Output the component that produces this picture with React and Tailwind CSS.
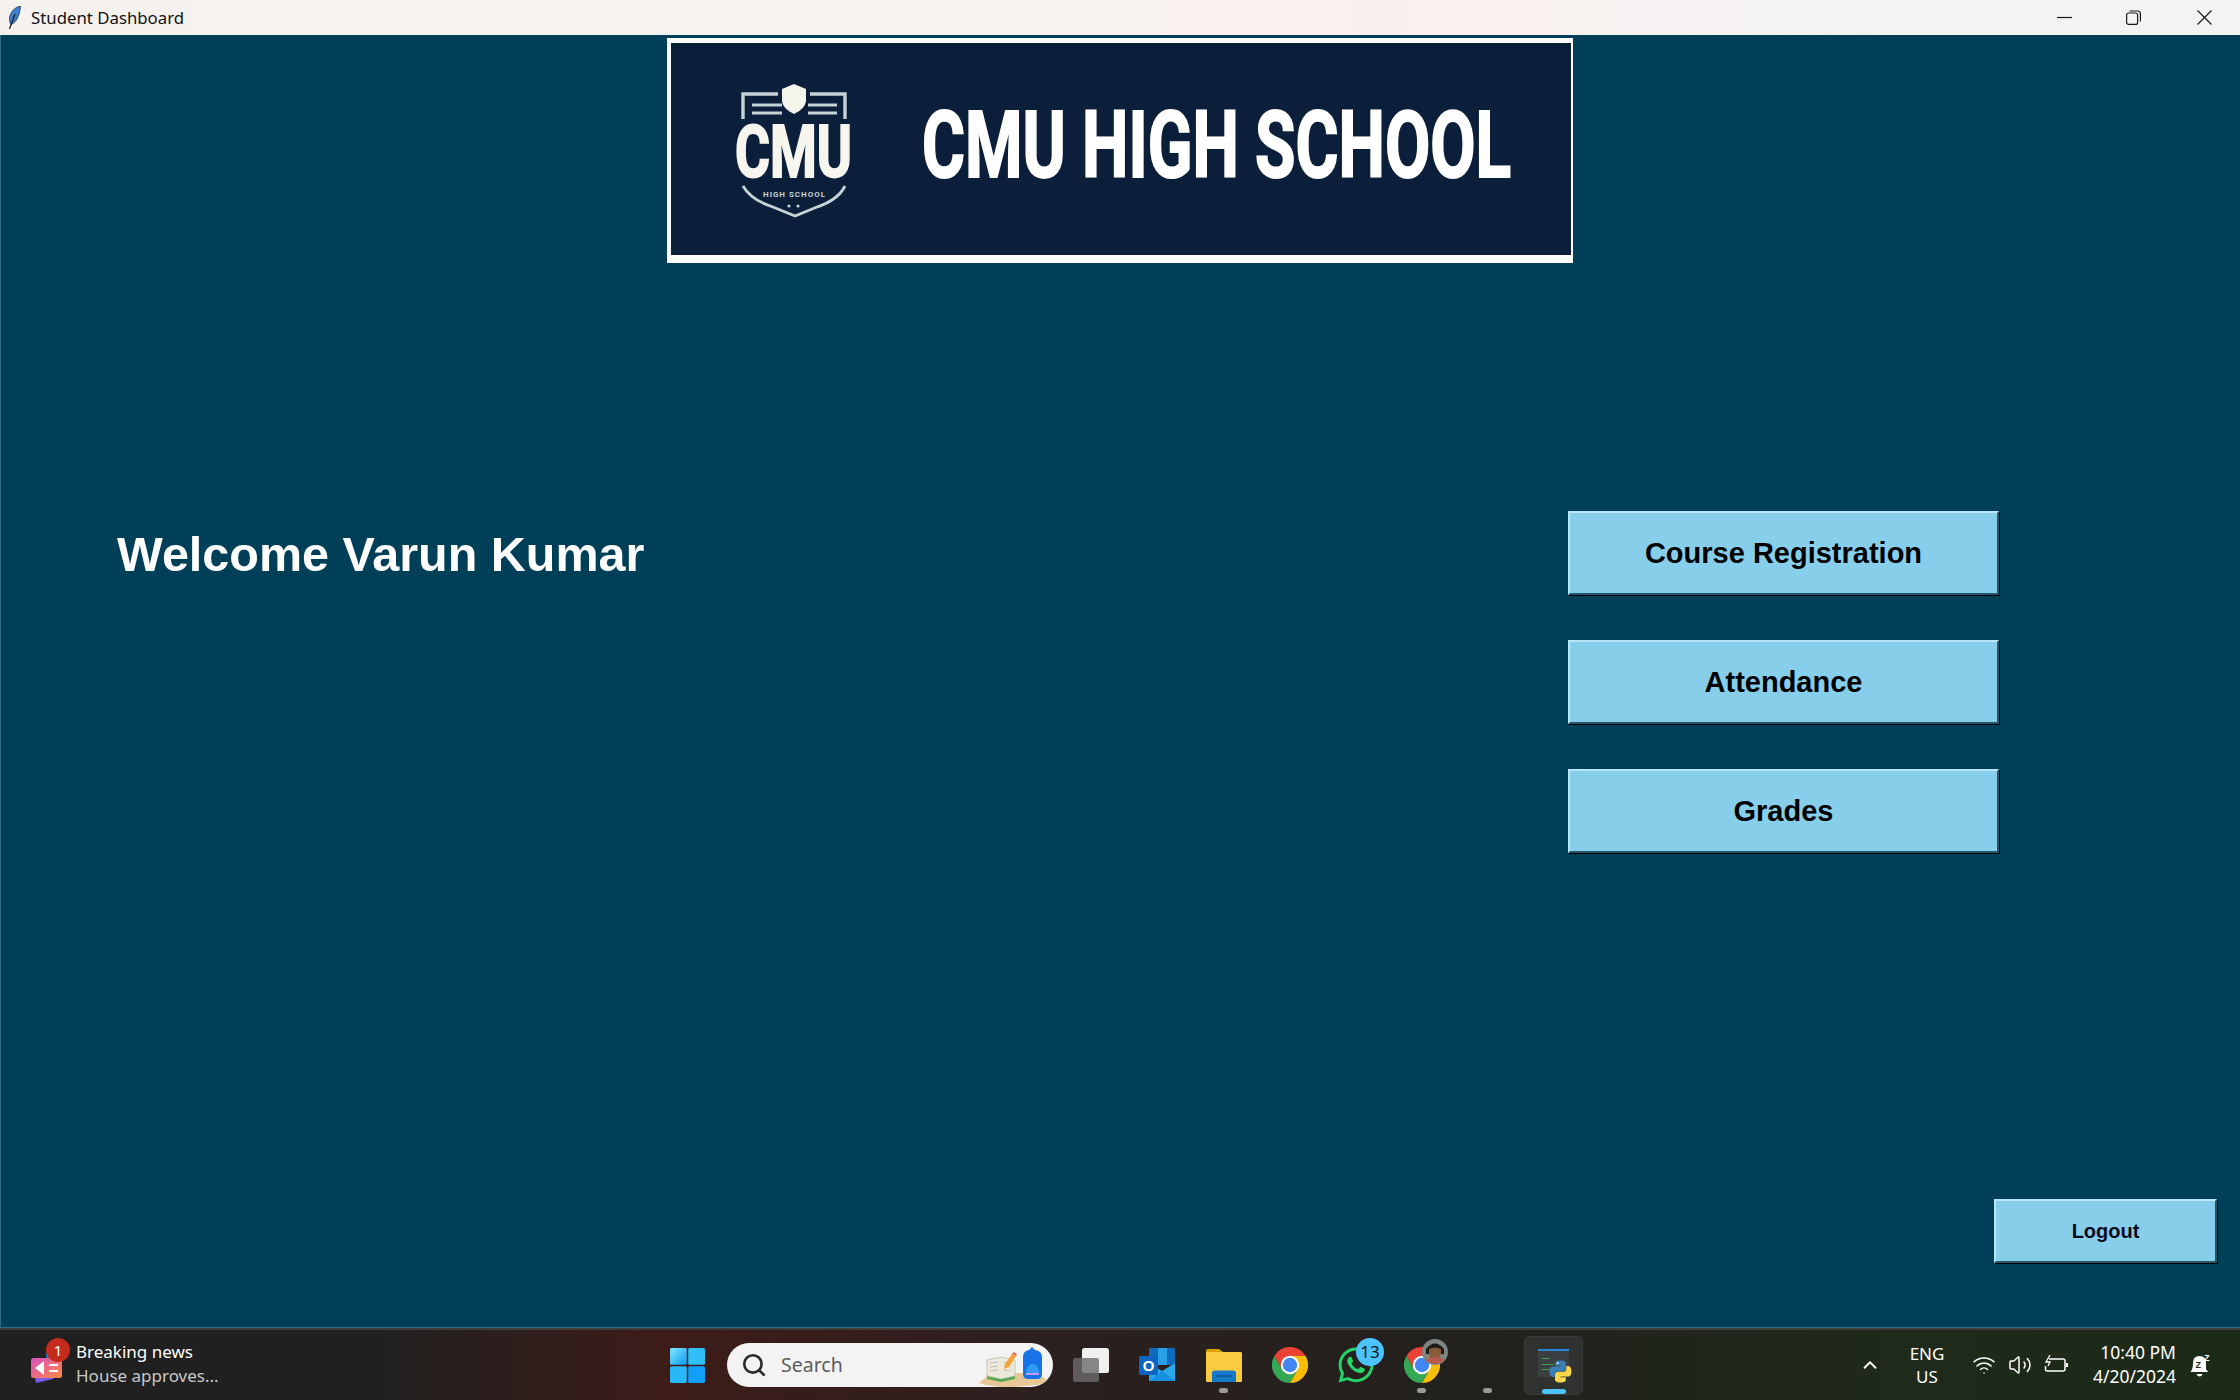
import { ChevronUp, Search, Volume2, Wifi } from 'lucide-react';
import { FaWhatsapp } from 'react-icons/fa';

const BUTTONS = ['Course Registration', 'Attendance', 'Grades'];

function ChromeIcon() {
  return (
    <svg viewBox="0 0 36 36" className="w-[36px] h-[36px]">
      <path d="M33.6 9A18 18 0 0 0 2.4 9L10.2 22.5L18 9Z" fill="#ea4335" />
      <path d="M2.4 9A18 18 0 0 0 18 36L25.8 22.5L10.2 22.5Z" fill="#34a853" />
      <path d="M18 36A18 18 0 0 0 33.6 9L18 9L25.8 22.5Z" fill="#fbbc04" />
      <circle cx="18" cy="18" r="9.2" fill="#fff" />
      <circle cx="18" cy="18" r="7.2" fill="#4285f4" />
    </svg>
  );
}

function PythonLogo({ className }) {
  return (
    <svg viewBox="0 0 32 32" className={className}>
      <path d="M15.9 2C8.7 2 9.2 5.2 9.2 5.2V8.6H16V9.6H6.6S2 9 2 16s4 7 4 7H8.5v-3.4s-.1-4 3.9-4h6.8s3.8.1 3.8-3.7V5.9S23.6 2 15.9 2z" fill="#3b7fb8" />
      <path d="M16.1 30c7.2 0 6.7-3.2 6.7-3.2V23.4H16v-1h9.4S30 23 30 16s-4-7-4-7H23.5v3.4s.1 4-3.9 4h-6.8s-3.8-.1-3.8 3.700v6S8.4 30 16.1 30z" fill="#fdd547" />
      <circle cx="12.3" cy="5.3" r="1.2" fill="#fff" />
      <circle cx="19.7" cy="26.7" r="1.2" fill="#fff" />
    </svg>
  );
}

function Emblem() {
  return (
    <svg viewBox="0 0 123 138" className="w-[123px] h-[138px] shrink-0 mt-[6px] overflow-visible">
      <path d="M46 11H11V36M78 11H113V36" fill="none" stroke="#c5d2d6" strokeWidth="3.4" />
      <path d="M20 22H50M20 30H50M76 22H105M76 30H105" fill="none" stroke="#c5d2d6" strokeWidth="3.2" />
      <path d="M62 1L74 6V18Q73 26 62 31Q51 26 50 18V6Z" fill="#f6f5ee" />
      <text x="3" y="94" fontFamily="Roboto" fontWeight="700" fontSize="72" textLength="117" lengthAdjust="spacingAndGlyphs" fill="#f6f5ee" stroke="#f6f5ee" strokeWidth="2">CMU</text>
      <path d="M11 103Q19 117 41 124L63 133L85 124Q106 117 113 103" fill="none" stroke="#c5d2d6" strokeWidth="2.8" />
      <text x="31" y="114" fontFamily="Roboto" fontWeight="700" fontSize="8" textLength="62" fill="#c5d2d6">HIGH SCHOOL</text>
      <circle cx="57" cy="123" r="1.6" fill="#c5d2d6" />
      <circle cx="66" cy="123" r="1.6" fill="#c5d2d6" />
    </svg>
  );
}

function TaskSlot({ children, dot, className }) {
  return (
    <div className={'relative w-[36px] h-full flex items-center justify-center shrink-0 ' + (className || '')}>
      {children}
      {dot && <span className="absolute bottom-[7px] left-[13px] w-[9px] h-[5px] rounded-full bg-[#9a9a9a]" />}
    </div>
  );
}

function SkyButton({ label, className, textClass }) {
  return (
    <button className={'bg-[#87ceeb] border-2 border-t-[#b9e6f6] border-l-[#b9e6f6] border-b-[#24566b] border-r-[#24566b] shadow-[1px_1px_0_#000] font-["Liberation_Sans",sans-serif] font-bold ' + className + ' ' + textClass}>
      {label}
    </button>
  );
}

export default function App() {
  return (
    <div className="w-[2240px] h-[1400px] flex flex-col overflow-hidden">
      {/* Title bar */}
      <div className="h-[35px] shrink-0 flex items-center bg-[linear-gradient(90deg,#f5f1ef_0%,#f6f2f0_45%,#f9f0ee_62%,#f3f3f3_85%)] font-['Noto_Sans',sans-serif] text-[16.8px] text-[#111]">
        <svg viewBox="0 0 13 23" className="w-[13px] h-[23px] ml-[8px] shrink-0">
          <path d="M12.5 0C6 1.5 1.5 7 1.5 13C1.5 15 2 17 3 18.5C8.5 17 12 8 12.5 0Z" fill="#3f7fd0" stroke="#1d3558" strokeWidth="0.8" />
          <path d="M7 8L1.5 23" stroke="#222" strokeWidth="1.3" />
        </svg>
        <span className="ml-[10px]">Student Dashboard</span>
        <div className="ml-auto mr-[28px] flex items-center">
          <svg viewBox="0 0 15 15" className="w-[15px] h-[15px]"><path d="M0 7.5H15" stroke="#1a1a1a" strokeWidth="1.2" /></svg>
          <svg viewBox="0 0 15 15" className="w-[15px] h-[15px] ml-[54px]" fill="none" stroke="#1a1a1a" strokeWidth="1.2">
            <rect x="0.6" y="3" width="11" height="11.4" rx="2" />
            <path d="M3.5 1H11.5Q14.4 1 14.4 4V11.5" />
          </svg>
          <svg viewBox="0 0 15 15" className="w-[15px] h-[15px] ml-[56px]"><path d="M0.5 0.5L14.5 14.5M14.5 0.5L0.5 14.5" stroke="#1a1a1a" strokeWidth="1.2" /></svg>
        </div>
      </div>

      {/* Window content */}
      <div className="flex-1 flex flex-col bg-[#003f58] shadow-[inset_1px_-1px_0_#2f6d84]">
        <div className="w-[906px] h-[225px] mx-auto mt-[3px] bg-white pl-[4px] pr-[2px] pt-[5px] pb-[8px]">
          <div className="w-full h-full bg-[#0b1f3a] flex items-center">
            <div className="ml-[61px]"><Emblem /></div>
            <svg viewBox="0 0 590 90" className="ml-[69px] w-[590px] h-[90px] mb-[8px] overflow-visible">
              <text x="-2" y="77" textLength="589" lengthAdjust="spacingAndGlyphs" fontFamily="Roboto" fontWeight="700" fontSize="92" fill="#fff" stroke="#fff" strokeWidth="2">CMU HIGH SCHOOL</text>
            </svg>
          </div>
        </div>

        <div className="flex justify-between items-start mt-[248px] pl-[117px] pr-[241px]">
          <h1 className="h-[84px] pt-[2px] flex items-center font-['Liberation_Sans',sans-serif] font-bold text-[48.5px] text-white">Welcome Varun Kumar</h1>
          <div className="flex flex-col gap-[45px]">
            {BUTTONS.map(b => (
              <SkyButton key={b} label={b} className="w-[431px] h-[84px] pt-[1px]" textClass="text-[29px] text-black" />
            ))}
          </div>
        </div>

        <div className="mt-auto self-end mr-[23px] mb-[65px]">
          <SkyButton label="Logout" className="block w-[223px] h-[64px]" textClass="text-[20px] text-[#0b0b1e]" />
        </div>
      </div>

      {/* Windows taskbar */}
      <div className="h-[72px] shrink-0 flex items-center border-t-2 border-[#3f3d3b] bg-[linear-gradient(90deg,#202020_0%,#212020_17%,#3d1c18_30%,#2b201f_47%,#22211d_65%,#1f2a1a_85%,#1c2a18_100%)] font-['Noto_Sans',sans-serif]">
        {/* News widget */}
        <div className="w-[670px] shrink-0 flex items-center pl-[29px]">
          <div className="relative w-[34px] h-[40px] shrink-0">
            <svg viewBox="0 0 34 40" className="w-[34px] h-[40px]">
              <defs>
                <linearGradient id="news" x1="0" y1="0" x2="1" y2="1">
                  <stop offset="0" stopColor="#d84fc0" />
                  <stop offset="1" stopColor="#ff8a45" />
                </linearGradient>
              </defs>
              <circle cx="25" cy="10" r="8" fill="#1f7fd8" />
              <path d="M5 28L28 28L24 34L7 38Z" fill="#7a5cf0" />
              <rect x="2" y="13" width="31" height="20" rx="2.5" fill="url(#news)" />
              <path d="M6 23L15 16V30Z" fill="#fff" />
              <path d="M20 20H29M20 26H29" stroke="#fff" strokeWidth="2.2" />
            </svg>
            <span className="absolute -top-[7px] right-[-7px] w-[24px] h-[24px] rounded-full bg-[#c42b1c] text-white text-[15px] leading-[24px] text-center">1</span>
          </div>
          <div className="ml-[13px] mb-[2px] text-[17px] leading-[24px]">
            <div className="text-white">Breaking news</div>
            <div className="text-[#c8c8c8]">House approves...</div>
          </div>
        </div>

        {/* Start */}
        <svg viewBox="0 0 35 35" className="w-[35px] h-[35px] shrink-0">
          <defs>
            <linearGradient id="win" x1="0" y1="0" x2="1" y2="1">
              <stop offset="0" stopColor="#7ee8fb" />
              <stop offset="1" stopColor="#0f9bf5" />
            </linearGradient>
          </defs>
          <rect width="16.8" height="16.8" rx="1.5" fill="url(#win)" />
          <rect x="18.2" width="16.8" height="16.8" rx="1.5" fill="#2fc0f7" />
          <rect y="18.2" width="16.8" height="16.8" rx="1.5" fill="#28b8f7" />
          <rect x="18.2" y="18.2" width="16.8" height="16.8" rx="1.5" fill="#119ff7" />
        </svg>

        {/* Search */}
        <div className="relative ml-[22px] w-[326px] h-[44px] shrink-0 rounded-full bg-[#f3f3f3] flex items-center overflow-hidden">
          <Search className="ml-[14px] w-[26px] h-[26px] text-[#2a2a2a]" strokeWidth={2.4} />
          <span className="ml-[14px] text-[19.5px] text-[#5c5c5c]">Search</span>
          <svg viewBox="0 0 72 40" className="absolute right-[4px] top-[4px] w-[72px] h-[40px]">
            <path d="M2 36L14 26H60L74 36Q50 40 28 40Q10 39 2 36Z" fill="#e6c795" />
            <path d="M10 15L24 12L38 15V32L24 35L10 32Z" fill="#58a84d" />
            <path d="M10 13L24 10L38 13V29L24 32L10 29Z" fill="#ece8da" stroke="#a9b79a" strokeWidth="0.6" />
            <path d="M13 16L21 15M13 20L21 19M13 24L21 23M27 15L31 16M27 19L33 20M27 23L35 24" stroke="#b5b5b5" strokeWidth="0.8" />
            <path d="M28 17L35 7L39 9L32 20L27 22Z" fill="#f6a339" />
            <path d="M35 7L36.5 5L40 7L39 9Z" fill="#ef6a5a" />
            <path d="M46 10Q46 4 52 3L55 0L58 3Q65 4 65 10V27Q65 32 60 32H51Q46 32 46 27Z" fill="#1774e8" />
            <path d="M49 26Q50 17 55.5 17Q61 17 62 26Z" fill="#2f9bf4" />
            <path d="M49 26H62V28H49Z" fill="#c59cf2" />
          </svg>
        </div>

        {/* Pinned apps */}
        <TaskSlot className="ml-[20px]">
          <svg viewBox="0 0 36 34" className="w-[36px] h-[34px]">
            <rect x="9" y="0" width="27" height="25" rx="2.5" fill="#f0f0f0" />
            <rect x="0" y="10" width="26" height="24" rx="2.5" fill="#6b6b6b" fillOpacity="0.8" />
          </svg>
        </TaskSlot>
        <TaskSlot className="ml-[30px]">
          <svg viewBox="0 0 36 34" className="w-[36px] h-[34px]">
            <rect x="10" y="0" width="26" height="17" rx="1.5" fill="#0f6cbd" />
            <path d="M19 0H28V17H19Z" fill="#2aa0e8" />
            <path d="M10 15L23 23L36 15V33H10Z" fill="#28a8ea" />
            <path d="M10 33L23 23L36 33Z" fill="#1490df" />
            <rect x="0" y="8" width="19" height="19" rx="2" fill="#0a66c2" />
            <text x="9.5" y="23" textAnchor="middle" fontFamily="Liberation Sans" fontWeight="700" fontSize="15" fill="#fff">O</text>
          </svg>
        </TaskSlot>
        <TaskSlot dot className="ml-[31px]">
          <svg viewBox="0 0 36 34" className="w-[36px] h-[34px]">
            <path d="M0 3Q0 1 2 1H13L17 4H34Q36 4 36 6V12H0Z" fill="#d6a300" />
            <rect x="0" y="4" width="36" height="30" rx="1.5" fill="#fdcb3f" />
            <path d="M6 34V25Q6 22.5 9 22.5H27Q30 22.5 30 25V34Z" fill="#1679c9" />
            <path d="M11 28H25" stroke="#0e4f8a" strokeWidth="1.5" />
          </svg>
        </TaskSlot>
        <TaskSlot className="ml-[30px]"><ChromeIcon /></TaskSlot>
        <TaskSlot className="ml-[30px]">
          <FaWhatsapp className="w-[40px] h-[40px] text-[#25d366]" />
          <span className="absolute top-[8px] left-[18px] w-[28px] h-[28px] rounded-full bg-[#4cc2ff] text-[#111] text-[17px] leading-[28px] text-center">13</span>
        </TaskSlot>
        <TaskSlot dot className="ml-[30px]">
          <ChromeIcon />
          <svg viewBox="0 0 26 26" className="absolute top-[9px] left-[18px] w-[26px] h-[26px]">
            <circle cx="13" cy="13" r="13" fill="#7f8582" />
            <path d="M4 10Q13 -1 22 10V15H4Z" fill="#1c1a18" />
            <path d="M7 10Q13 7 19 10Q20 21 13 21Q6 21 7 10Z" fill="#8a5a3c" />
            <path d="M3 21Q13 15 23 21Q13 29 3 21Z" fill="#b55a4a" />
          </svg>
        </TaskSlot>
        <TaskSlot dot className="ml-[30px]" />

        {/* Running python window */}
        <div className="relative ml-[18px] w-[59px] h-[59px] shrink-0 rounded-[6px] bg-[#2f322e] border border-[#383b37] flex items-center justify-center">
          <div className="absolute left-[13px] top-[12px] w-[31px] h-[28px] bg-[#3c3f42] border-t-2 border-[#2a87d8]">
            <div className="mt-[7px] ml-[4px] w-[8px] h-[1px] bg-[#3fa34d]" />
            <div className="mt-[5px] ml-[4px] w-[12px] h-[1px] bg-[#3fa34d]" />
            <div className="mt-[4px] ml-[4px] w-[10px] h-[1px] bg-[#3fa34d]" />
          </div>
          <PythonLogo className="absolute left-[23px] top-[22px] w-[25px] h-[25px]" />
          <span className="absolute bottom-[0px] left-[17px] w-[24px] h-[5px] rounded-full bg-[#4cc2ff]" />
        </div>

        {/* System tray */}
        <ChevronUp className="ml-auto w-[22px] h-[22px] text-white" strokeWidth={2} />
        <div className="ml-[26px] w-[40px] text-center text-white text-[17px] leading-[23px]">
          <div>ENG</div>
          <div>US</div>
        </div>
        <Wifi className="ml-[25px] w-[24px] h-[24px] text-white" strokeWidth={1.5} />
        <Volume2 className="ml-[12px] w-[24px] h-[24px] text-white" strokeWidth={1.5} />
        <svg viewBox="0 0 24 20" className="ml-[12px] w-[24px] h-[20px]" fill="none" stroke="#fff" strokeWidth="1.5">
          <path d="M5 4H19Q21 4 21 6V14Q21 16 19 16H3Q1.5 16 1.5 14V11" />
          <path d="M23 8V12" strokeWidth="2" />
          <path d="M6 0L2 7H6L4 11" strokeWidth="1.3" />
        </svg>
        <div className="ml-[18px] mb-[2px] w-[90px] text-right text-white text-[17.5px] leading-[24px]">
          <div>10:40 PM</div>
          <div>4/20/2024</div>
        </div>
        <div className="relative ml-[13px] mr-[29px] w-[22px] h-[24px]">
          <svg viewBox="0 0 21 24" className="w-[22px] h-[24px]">
            <path d="M1 19Q3.5 16 3.5 10Q3.5 3 10 3Q16 3 16.5 9V16Q17.5 18 19 19Z" fill="#fff" />
            <path d="M7 21H13Q12 23.5 10 23.5Q8 23.5 7 21Z" fill="#fff" />
            <text x="6" y="15" fontFamily="Liberation Sans" fontWeight="700" fontSize="9" fill="#1c2a18">Z</text>
            <text x="14.5" y="8" fontFamily="Liberation Sans" fontWeight="700" fontSize="9" fill="#fff">Z</text>
          </svg>
        </div>
      </div>
    </div>
  );
}
